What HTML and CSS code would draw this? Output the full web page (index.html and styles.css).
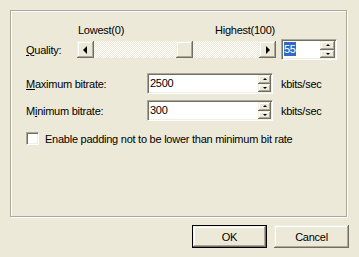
FILE: index.html
```html
<!DOCTYPE html>
<html>
<head>
	<title>Quality</title>
	<link rel="stylesheet" href="styles.css">
</head>
<body>
	<div class="dialog">
		<div class="panel">
			<div class="scale">
				<span>Lowest(0)</span>
				<span>Highest(100)</span>
			</div>

			<div class="quality">
				<label class="lbl-q"><u>Q</u>uality:</label>
				<div class="scrollbar">
					<div class="raised sb-btn"><span class="tri-left"></span></div>
					<div class="track">
						<div class="raised thumb" style="margin-left: 82px"></div>
					</div>
					<div class="raised sb-btn"><span class="tri-right"></span></div>
				</div>
				<div class="edit edit-q">
					<span class="value"><span class="sel">55</span></span>
					<div class="spin">
						<div class="raised spin-btn"><span class="tri-up"></span></div>
						<div class="raised spin-btn"><span class="tri-down"></span></div>
					</div>
				</div>
			</div>

			<div class="row first">
				<label class="lbl"><u>M</u>aximum bitrate:</label>
				<div class="edit edit-rate">
					<span class="value">2500</span>
					<div class="spin">
						<div class="raised spin-btn"><span class="tri-up"></span></div>
						<div class="raised spin-btn"><span class="tri-down"></span></div>
					</div>
				</div>
				<span class="unit">kbits/sec</span>
			</div>

			<div class="row">
				<label class="lbl">M<u>i</u>nimum bitrate:</label>
				<div class="edit edit-rate">
					<span class="value">300</span>
					<div class="spin">
						<div class="raised spin-btn"><span class="tri-up"></span></div>
						<div class="raised spin-btn"><span class="tri-down"></span></div>
					</div>
				</div>
				<span class="unit">kbits/sec</span>
			</div>

			<div class="check-row">
				<span class="checkbox"></span>
				<span>Enable padding not to be lower than minimum bit rate</span>
			</div>
		</div>

		<div class="buttons">
			<div class="btn default"><span class="raised face">OK</span></div>
			<div class="btn"><span class="raised face">Cancel</span></div>
		</div>
	</div>
</body>
</html>
```

FILE: styles.css
```css
body{
	margin: 0;
	background: #ece9d8;
	font: 11px "Liberation Sans", Arial, sans-serif;
	letter-spacing: -0.25px;
	color: #000;
}

.dialog{
	width: 359px;
	height: 257px;
	padding: 10px 10px 0 10px;
	box-sizing: border-box;
}

.panel{
	width: 337px;
	height: 207px;
	box-sizing: border-box;
	border: 1px solid #aca899;
	box-shadow: inset 1px 1px #fff, 1px 1px #fff;
	padding: 13px 0 0 15px;
}

.scale{
	display: flex;
	justify-content: space-between;
	width: 199px;
	height: 13px;
	line-height: 13px;
	margin-left: 51px;
	padding: 0 1px;
	box-sizing: border-box;
}

.quality{
	display: flex;
	align-items: center;
	height: 21px;
	margin-top: 2px;
}

.lbl-q{
	width: 51px;
}

.scrollbar{
	display: flex;
	width: 199px;
	height: 17px;
}

.raised{
	background: #ece9d8;
	box-sizing: border-box;
	box-shadow: inset -1px -1px #716f64, inset 1px 1px #f1efe2, inset -2px -2px #aca899, inset 2px 2px #fff;
}

.sb-btn{
	width: 17px;
	height: 17px;
	display: flex;
	align-items: center;
	justify-content: center;
}

.track{
	flex: 1;
	display: flex;
	background: repeating-conic-gradient(#fff 0 25%, #ece9d8 0 50%) 0 0 / 2px 2px;
}

.thumb{
	width: 17px;
	height: 17px;
}

.tri-left, .tri-right, .tri-up, .tri-down{
	width: 0;
	height: 0;
	border-style: solid;
	border-color: transparent;
}

.tri-left{
	border-width: 4px 4px 4px 0;
	border-right-color: #000;
	margin-left: -1px;
}

.tri-right{
	border-width: 4px 0 4px 4px;
	border-left-color: #000;
	margin-left: 1px;
}

.tri-up{
	border-width: 0 2px 2px 2px;
	border-bottom-color: #000;
}

.tri-down{
	border-width: 2px 2px 0 2px;
	border-top-color: #000;
}

.edit{
	display: flex;
	height: 21px;
	box-sizing: border-box;
	background: #fff;
	border: 1px solid;
	border-color: #aca899 #fff #fff #aca899;
	box-shadow: inset 1px 1px #716f64, inset -1px -1px #f1efe2;
	padding: 1px;
}

.value{
	flex: 1;
	padding: 1px 0 0 1px;
	line-height: 15px;
}

.edit-q{
	width: 56px;
	margin-left: 5px;
}

.sel{
	background: #316ac5;
	color: #fff;
	padding: 1px 0;
}

.spin{
	display: flex;
	flex-direction: column;
	width: 15px;
}

.edit-rate .spin{
	width: 13px;
}

.spin-btn{
	flex: 1;
	display: flex;
	align-items: center;
	justify-content: center;
}

.row{
	display: flex;
	align-items: center;
	height: 21px;
	margin-top: 6px;
}

.row.first{
	margin-top: 13px;
}

.lbl{
	width: 121px;
}

.edit-rate{
	width: 126px;
}

.unit{
	margin-left: 8px;
}

.check-row{
	display: flex;
	align-items: center;
	height: 13px;
	margin-top: 11px;
}

.checkbox{
	width: 13px;
	height: 13px;
	box-sizing: border-box;
	background: #fff;
	border: 1px solid;
	border-color: #aca899 #fff #fff #aca899;
	box-shadow: inset 1px 1px #716f64, inset -1px -1px #f1efe2;
	margin-right: 6px;
}

.buttons{
	display: flex;
	justify-content: flex-end;
	gap: 7px;
	margin-top: 8px;
}

.btn{
	width: 75px;
	height: 23px;
	box-sizing: border-box;
	display: flex;
}

.btn.default{
	border: 1px solid #000;
}

.face{
	flex: 1;
	display: flex;
	align-items: center;
	justify-content: center;
}
```
